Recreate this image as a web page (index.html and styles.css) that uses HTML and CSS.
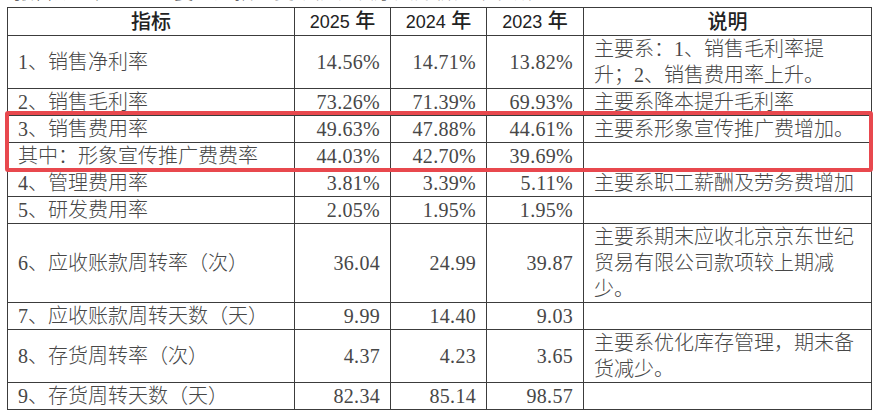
FILE: index.html
```html
<!DOCTYPE html>
<html lang="zh-CN">
<head>
<meta charset="utf-8">
<title>主要财务指标</title>
<link rel="stylesheet" href="styles.css">
</head>
<body>
<div class="caption"><span class="caption-text">报告期内，公司主要财务指标变动情况及原因分析如下表所示：</span></div>
<div class="wrap">
  <table class="fin">
    <colgroup>
      <col class="c-name"><col class="c-num"><col class="c-num"><col class="c-num3"><col class="c-desc">
    </colgroup>
    <thead>
      <tr><th>指标</th><th><span class="yr">2025</span> 年</th><th><span class="yr">2024</span> 年</th><th><span class="yr">2023</span> 年</th><th>说明</th></tr>
    </thead>
    <tbody>
      <tr><td class="name">1、销售净利率</td><td class="num">14.56%</td><td class="num">14.71%</td><td class="num">13.82%</td><td class="desc">主要系：1、销售毛利率提<br>升；2、销售费用率上升。</td></tr>
      <tr><td class="name">2、销售毛利率</td><td class="num">73.26%</td><td class="num">71.39%</td><td class="num">69.93%</td><td class="desc">主要系降本提升毛利率</td></tr>
      <tr><td class="name">3、销售费用率</td><td class="num">49.63%</td><td class="num">47.88%</td><td class="num">44.61%</td><td class="desc">主要系形象宣传推广费增加。</td></tr>
      <tr><td class="name">其中：形象宣传推广费费率</td><td class="num">44.03%</td><td class="num">42.70%</td><td class="num">39.69%</td><td class="desc"></td></tr>
      <tr><td class="name">4、管理费用率</td><td class="num">3.81%</td><td class="num">3.39%</td><td class="num">5.11%</td><td class="desc">主要系职工薪酬及劳务费增加</td></tr>
      <tr><td class="name">5、研发费用率</td><td class="num">2.05%</td><td class="num">1.95%</td><td class="num">1.95%</td><td class="desc"></td></tr>
      <tr><td class="name">6、应收账款周转率（次）</td><td class="num">36.04</td><td class="num">24.99</td><td class="num">39.87</td><td class="desc">主要系期末应收北京京东世纪<br>贸易有限公司款项较上期减<br>少。</td></tr>
      <tr><td class="name">7、应收账款周转天数（天）</td><td class="num">9.99</td><td class="num">14.40</td><td class="num">9.03</td><td class="desc"></td></tr>
      <tr><td class="name">8、存货周转率（次）</td><td class="num">4.37</td><td class="num">4.23</td><td class="num">3.65</td><td class="desc">主要系优化库存管理，期末备<br>货减少。</td></tr>
      <tr><td class="name">9、存货周转天数（天）</td><td class="num">82.34</td><td class="num">85.14</td><td class="num">98.57</td><td class="desc"></td></tr>
    </tbody>
  </table>
  <div class="highlight"></div>
</div>
</body>
</html>
```
FILE: styles.css
```css
html, body {
  margin: 0;
  padding: 0;
  background: #ffffff;
}
body {
  font-family: "Liberation Serif", "Noto Sans CJK SC", serif;
  color: #474747;
  width: 879px;
  height: 419px;
  overflow: hidden;
}
.caption {
  height: 7px;
  overflow: hidden;
  margin-left: 14px;
}
.caption-text {
  display: block;
  margin-top: -19px;
  font-size: 20px;
  line-height: 22px;
  color: #666;
  white-space: nowrap;
  font-weight: 300;
}
.wrap {
  position: relative;
  margin-left: 7px;
  width: 864px;
}
.fin {
  border-collapse: collapse;
  table-layout: fixed;
  width: 864px;
  font-size: 20px;
  line-height: 26px;
}
.c-name { width: 287px; }
.c-num { width: 96px; }
.c-num3 { width: 97px; }
.c-desc { width: 288px; }
.fin th, .fin td {
  border: 1px solid #3c3c3c;
  padding: 0 10px;
  vertical-align: middle;
  white-space: nowrap;
}
.fin th {
  font-family: "Liberation Sans", "Noto Sans CJK SC", sans-serif;
  font-weight: 500;
  text-align: center;
  color: #222;
}
.fin th .yr {
  font-size: 18px;
}
.fin td {
  font-weight: 300;
}
.num {
  text-align: right;
  letter-spacing: 0.3px;
}
.name, .desc {
  text-align: left;
}
.highlight {
  position: absolute;
  left: -2px;
  top: 104px;
  width: 860px;
  height: 53px;
  border: 4px solid #e8484e;
  border-radius: 3px;
  pointer-events: none;
}
```
